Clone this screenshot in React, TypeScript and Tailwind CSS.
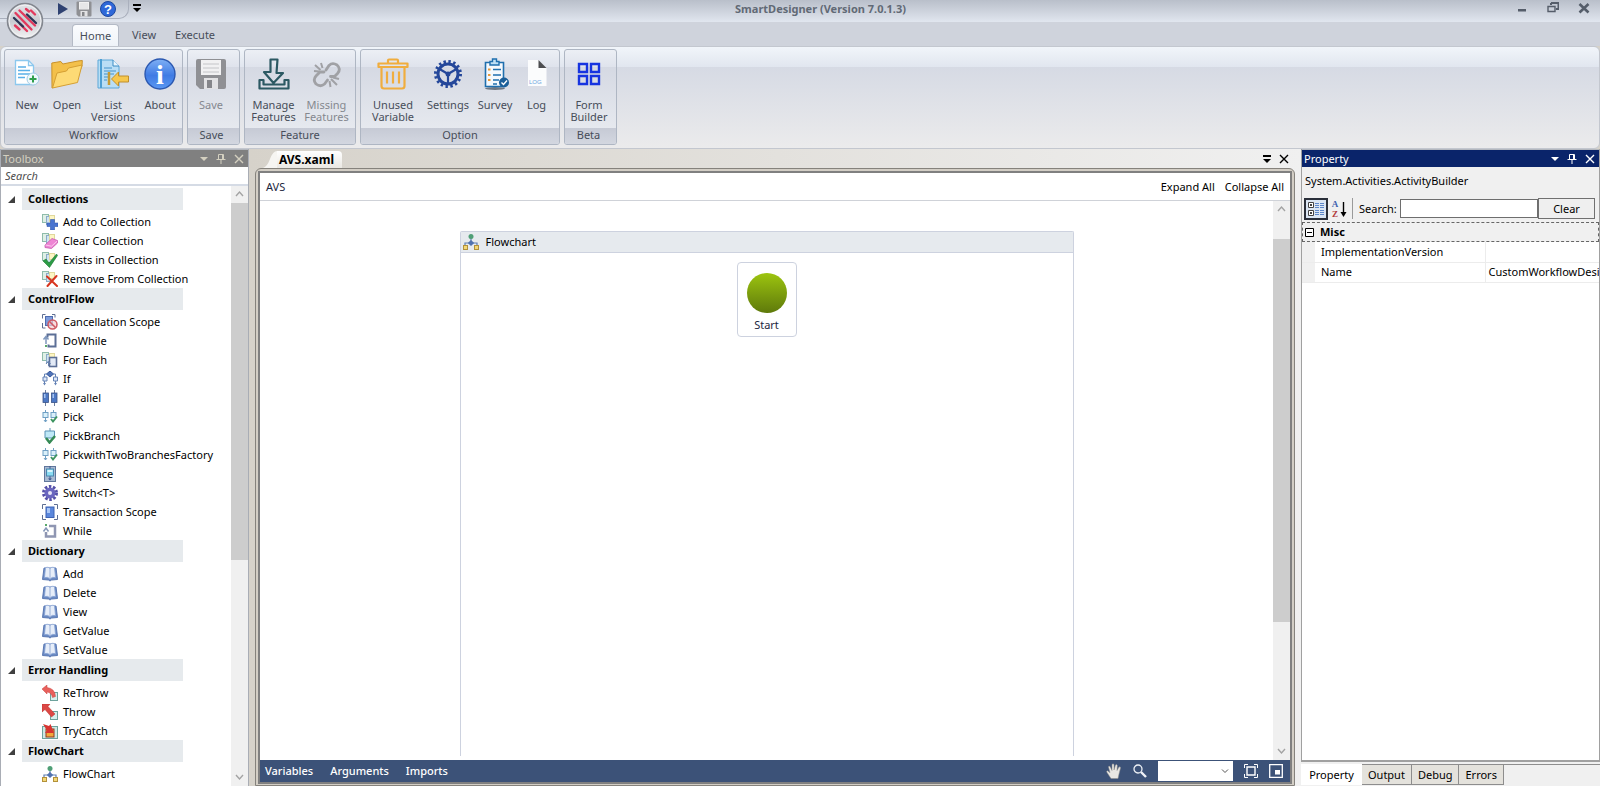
import type { ReactNode } from "react"
import clsx from "clsx"

type IconName =
  | "add"
  | "clear"
  | "exists"
  | "remove"
  | "cancel"
  | "doWhile"
  | "forEach"
  | "if"
  | "parallel"
  | "pick"
  | "pickBranch"
  | "sequence"
  | "switch"
  | "transaction"
  | "while"
  | "book"
  | "rethrow"
  | "throw"
  | "tryCatch"
  | "flowchart"

interface ToolGroup {
  title: string
  items: { label: string; icon: IconName }[]
}

const toolGroups: ToolGroup[] = [
  {
    title: "Collections",
    items: [
      { label: "Add to Collection", icon: "add" },
      { label: "Clear Collection", icon: "clear" },
      { label: "Exists in Collection", icon: "exists" },
      { label: "Remove From Collection", icon: "remove" },
    ],
  },
  {
    title: "ControlFlow",
    items: [
      { label: "Cancellation Scope", icon: "cancel" },
      { label: "DoWhile", icon: "doWhile" },
      { label: "For Each", icon: "forEach" },
      { label: "If", icon: "if" },
      { label: "Parallel", icon: "parallel" },
      { label: "Pick", icon: "pick" },
      { label: "PickBranch", icon: "pickBranch" },
      { label: "PickwithTwoBranchesFactory", icon: "pick" },
      { label: "Sequence", icon: "sequence" },
      { label: "Switch<T>", icon: "switch" },
      { label: "Transaction Scope", icon: "transaction" },
      { label: "While", icon: "while" },
    ],
  },
  {
    title: "Dictionary",
    items: [
      { label: "Add", icon: "book" },
      { label: "Delete", icon: "book" },
      { label: "View", icon: "book" },
      { label: "GetValue", icon: "book" },
      { label: "SetValue", icon: "book" },
    ],
  },
  {
    title: "Error Handling",
    items: [
      { label: "ReThrow", icon: "rethrow" },
      { label: "Throw", icon: "throw" },
      { label: "TryCatch", icon: "tryCatch" },
    ],
  },
  { title: "FlowChart", items: [{ label: "FlowChart", icon: "flowchart" }] },
]

// stacked sheets shared by the collection activities
const sheets = (
  <>
    <rect x="0.5" y="0.5" width="6" height="8" fill="#dff0e6" stroke="#8fbcab" />
    <rect x="4.5" y="2.5" width="6" height="8" fill="#cfe3f2" stroke="#8cabc8" />
    <rect x="7.5" y="1.5" width="5" height="6" fill="#fdf6c4" stroke="#e0d89c" />
  </>
)

const pickShape = (
  <g fill="#d9f0fa" stroke="#6f9fc4">
    <path d="M3.5 1v12M11.5 1v8" />
    <rect x="1" y="3.5" width="5" height="5" />
    <rect x="9" y="3.5" width="5" height="5" />
    <path d="M2 11l1.500 2 1.500-2" fill="none" />
    <path d="M9 10l2 2.500 4-5" fill="none" stroke="#3d9460" strokeWidth="2" />
  </g>
)

const toolIcons: Record<IconName, ReactNode> = {
  add: (
    <>
      {sheets}
      <path d="M8.500 5.500h4v3.500H16v3.500h-3.500V16h-4v-3.500H5V9h3.500z" fill="#4a74d0" stroke="#3157ad" strokeWidth="0.6" />
    </>
  ),
  clear: (
    <>
      {sheets}
      <path d="M3 12l7-6.500 5.500 2v2.500l-6 5.500-6.500-1z" fill="#ee86d4" stroke="#c75bae" strokeWidth="0.8" />
      <path d="M3.500 12l6 1.200 5.500-5" fill="none" stroke="#fbc8ee" />
    </>
  ),
  exists: (
    <>
      {sheets}
      <path d="M1 9l3-2 3 4 7.500-9 1 1.500L7.500 15.500z" fill="#2c9c45" stroke="#1d7a32" strokeWidth="0.6" />
    </>
  ),
  remove: (
    <>
      {sheets}
      <path d="M5 5.500l10 9.500M14.500 5L5.500 15" stroke="#d8351f" strokeWidth="2" strokeLinecap="round" />
    </>
  ),
  cancel: (
    <>
      <path d="M3.500 0.500h-3v4M0.500 9v5h3M10 0.500h3v3" fill="none" stroke="#5f6f92" />
      <rect x="3.500" y="2.500" width="7" height="9" fill="#7d9cdc" stroke="#4f6cae" />
      <circle cx="10.500" cy="10.500" r="4.500" fill="#f3cfd2" fillOpacity="0.7" stroke="#cf5962" strokeWidth="1.500" />
      <path d="M7.500 7.500l6 6" stroke="#cf5962" strokeWidth="1.500" />
    </>
  ),
  doWhile: (
    <>
      <path d="M6.500 3.500h-1v-2h8v12h-7v-2" fill="none" stroke="#5c6f96" strokeWidth="2" />
      <path d="M1.500 6.500l2.500-3 2.500 3M4 4v7" fill="none" stroke="#7f97bd" strokeWidth="1.500" />
      <rect x="3" y="12" width="2" height="2" fill="#58a86a" />
    </>
  ),
  while: (
    <>
      <path d="M7 3h6v10.500H4V9" fill="none" stroke="#8f96b2" strokeWidth="2.500" />
      <path d="M1.500 8.500L4 5l2.500 3.500" fill="none" stroke="#8596b8" strokeWidth="1.500" />
      <rect x="3" y="1" width="2" height="2" fill="#58a86a" />
    </>
  ),
  forEach: (
    <>
      {sheets}
      <rect x="7.500" y="5.500" width="7" height="9" fill="#e3eaf6" stroke="#5c6f96" strokeWidth="1.600" />
      <path d="M4 12l2.500-3 2 3M6.500 10v4" fill="none" stroke="#6680ad" />
    </>
  ),
  if: (
    <>
      <path d="M8 0l3.500 3L8 6 4.500 3z" fill="#4f73b8" stroke="#385a9d" />
      <path d="M5 3H2.500v9M11 3h2.500v9" fill="none" stroke="#6482b5" />
      <path d="M1 6h4v4H1zM11.500 6h4v4h-4z" fill="#dce7f8" stroke="#6482b5" />
      <path d="M1 12l1.500 2.500L4 12zM12 12l1.500 2.500L15 12z" fill="#6482b5" />
    </>
  ),
  parallel: (
    <>
      <path d="M3.500 0v16M12.500 0v16" stroke="#6e7f9f" />
      <rect x="1" y="3" width="5.500" height="9.500" fill="#4d78c4" stroke="#3b5388" strokeWidth="0.8" />
      <rect x="9.500" y="3" width="5.500" height="9.500" fill="#4d78c4" stroke="#3b5388" strokeWidth="0.8" />
      <path d="M2 4h1.500v4H2zM10.500 4H12v4h-1.500z" fill="#a6c3f0" />
    </>
  ),
  pick: pickShape,
  pickBranch: (
    <>
      <path d="M8 0v3M3 3h9.500v7H3z" fill="#bfe8f7" stroke="#5b92b5" />
      <path d="M4 10l3.500 4.500L13 8" fill="none" stroke="#358a55" strokeWidth="2.500" />
    </>
  ),
  sequence: (
    <>
      <rect x="2.500" y="0.500" width="11" height="15" fill="#a9bad2" stroke="#60769c" />
      <path d="M8 0v3M8 10v3" stroke="#38538c" />
      <rect x="4.500" y="3" width="7" height="7" fill="#8adcf3" stroke="#4b86ad" />
      <path d="M5.500 4h5v2h-5z" fill="#dcf6fd" />
      <path d="M6 12.500l2 2 2-2z" fill="#38538c" />
    </>
  ),
  switch: (
    <>
      <circle cx="8" cy="8" r="6.500" fill="none" stroke="#5550a8" strokeWidth="3" strokeDasharray="2.500 1.600" />
      <circle cx="8" cy="8" r="5.500" fill="#6a66bf" />
      <circle cx="8" cy="8" r="2" fill="#e8e7fa" />
    </>
  ),
  transaction: (
    <>
      <path d="M4 0.500H0.500V5M12 0.500h3.500V5M4 15.500H0.500V11M12 15.500h3.500V11" fill="none" stroke="#5f6f92" />
      <rect x="4" y="3" width="8" height="10.500" fill="#5b87dc" stroke="#3d62b3" />
      <rect x="5" y="4" width="3" height="5" fill="#a9c6f6" />
    </>
  ),
  book: (
    <>
      <path d="M0.500 13.500L2 2h12l1.500 11.500-6 0.500-1.500 1-1.500-1z" fill="#6a8ac4" stroke="#5a78b2" />
      <path d="M2.500 11.500L3.500 1.500q3-1 4.500 1 1.500-2 4.500-1l1 10q-3.500-1-5.500 1.500-2-2.500-5.500-1.500z" fill="#e7eef9" stroke="#8aa5d4" strokeWidth="0.8" />
      <path d="M8 2.500V13" stroke="#9ab0d8" />
    </>
  ),
  rethrow: (
    <>
      <rect x="8.500" y="7.500" width="7" height="8" fill="#d6f0ee" stroke="#6da29c" />
      <path d="M0 4l5-4v2.500q8 1 8.500 9l-3 1q-1-5-5.500-5.500V9z" fill="#e8605c" stroke="#c8423f" strokeWidth="0.5" />
    </>
  ),
  throw: (
    <>
      <rect x="8.500" y="7.500" width="7" height="8" fill="#d6f0ee" stroke="#6da29c" />
      <path d="M0 0h8L6 2.500l7 7.500-3.500 3-6.500-7.500L0 8z" fill="#dc4845" stroke="#b8302d" strokeWidth="0.5" />
    </>
  ),
  tryCatch: (
    <>
      <rect x="0.500" y="3.500" width="15" height="12" fill="#cde8e4" stroke="#6da29c" />
      <rect x="4" y="6" width="8" height="8" fill="#f2a93b" stroke="#8f3a22" />
      <path d="M1 1l6 2 1.500-2 3.500 9H3l2-2.500z" fill="#d83431" />
    </>
  ),
  flowchart: (
    <>
      <path d="M8 3v5M2 12V9h12v3" fill="none" stroke="#5f7fb2" strokeWidth="1.200" />
      <circle cx="8" cy="2.500" r="2.500" fill="#4f9f76" />
      <path d="M8 6l3.200 3L8 12 4.800 9z" fill="#5273b0" />
      <rect x="0.500" y="11.500" width="4" height="4" fill="#f3d877" stroke="#b3913a" />
      <rect x="11.500" y="11.500" width="4" height="4" fill="#f3d877" stroke="#b3913a" />
    </>
  ),
}

function ToolIcon({ name }: { name: IconName }) {
  return (
    <svg viewBox="0 0 16 16" className="size-4 shrink-0" aria-hidden="true">
      {toolIcons[name]}
    </svg>
  )
}

function Big({ children }: { children: ReactNode }) {
  return (
    <svg viewBox="0 0 32 32" className="size-8" fill="none" aria-hidden="true">
      {children}
    </svg>
  )
}

const newIcon = (
  <Big>
    <path d="M4.500 2.500h13l5 5v19h-18z" fill="#fff" stroke="#8cc8ee" strokeWidth="1.300" />
    <path d="M17.500 2.500v5h5" stroke="#8cc8ee" strokeWidth="1.300" />
    <path d="M7 9h8M7 12.500h12M7 16h12M7 19.500h7" stroke="#5ab0e8" strokeWidth="1.400" />
    <circle cx="22" cy="21" r="6" fill="#eef8fd" stroke="#a4cde6" />
    <path d="M22 17.500v7M18.500 21h7" stroke="#2f9f4c" strokeWidth="2" />
  </Big>
)

const openIcon = (
  <Big>
    <path d="M1 30L0.800 5l9-1.500 2 2.500 15-3 4.500-0.500L31 8 26 20z" fill="#f3c04a" stroke="#c9912a" />
    <path d="M1.500 30l4.500-15 9.500-2 2-3 13.500-3-4.500 17.500z" fill="#fdda75" stroke="#d59f33" />
  </Big>
)

const listIcon = (
  <Big>
    <path d="M1 2h15l6 6v22H1z" fill="#b9def5" stroke="#5aa7d8" />
    <path d="M16 2v6h6" fill="#eaf6fd" stroke="#3b8cc4" />
    <path d="M4 1v29" stroke="#4d9fd3" strokeWidth="2" />
    <path d="M7 10h8M7 13h12M7 16h10M7 19h4M7 22h3" stroke="#4592c9" strokeWidth="1.200" />
    <path d="M12 14v13" stroke="#c69b34" strokeWidth="2.500" />
    <path d="M14.500 21l7-7v4h10v6h-10v4z" fill="#f6c74d" stroke="#c08f2c" />
  </Big>
)

const aboutIcon = (
  <Big>
    <defs>
      <linearGradient id="aboutFill" x1="0" y1="0" x2="0" y2="1">
        <stop offset="0" stopColor="#7fb0f5" />
        <stop offset="0.550" stopColor="#3f7be4" />
        <stop offset="1" stopColor="#5a98f2" />
      </linearGradient>
    </defs>
    <circle cx="16" cy="16" r="15" fill="url(#aboutFill)" stroke="#2b58b0" strokeWidth="1.400" />
    <text x="16" y="26" textAnchor="middle" fontSize="28" fontWeight="700" fill="#fff" fontFamily="Liberation Serif, serif">
      i
    </text>
  </Big>
)

function Floppy({ className }: { className?: string }) {
  return (
    <svg viewBox="0 0 32 32" className={className} aria-hidden="true">
      <path d="M1 3q0-2 2-2h26q2 0 2 2v26q0 2-2 2H5l-4-4z" fill="#8f9094" />
      <path d="M6 2h20v15H6z" fill="#f1f1f2" />
      <path d="M8 6h16M8 10h16M8 14h16" stroke="#c4c5c8" />
      <path d="M9 20h14v11H9z" fill="#e2e2e4" />
      <path d="M12 22h5v8h-5z" fill="#85868a" />
    </svg>
  )
}

const manageIcon = (
  <Big>
    <path d="M12.500 1.500h7L18.500 15h6.500l-9.500 10L6 14h6.500zM1.500 22v8.500h29V22h-4v4.500h-21V22z" stroke="#2c5963" strokeWidth="2.200" strokeLinejoin="round" />
  </Big>
)

const missingIcon = (
  <Big>
    <g stroke="#a0a1a5" strokeWidth="2.800" strokeLinecap="round">
      <path d="M15 12l3-4.500q3.500-3.500 8-0.500 4.500 4 0.500 8.500l-3 3h-4" />
      <path d="M13 14h-4l-4 4q-3.500 4 0 8 4.500 3.500 8.500 0l3-4" />
    </g>
    <path d="M10 5l1.500 5M4 7l5.500 5M3 13l5 0.500M20 21l6 6M18.500 23l1 6M22 19.500l6 1.500" stroke="#a0a1a5" strokeWidth="2" />
  </Big>
)

const trashIcon = (
  <Big>
    <g stroke="#f0ad3e" strokeWidth="2.200" strokeLinejoin="round">
      <path d="M1.500 5.500h29v3.500h-29zM11 5.500v-3q0-1 1-1h8q1 0 1 1v3" />
      <path d="M4.500 9v19q0 2.500 2.500 2.500h18q2.500 0 2.500-2.500V9" />
      <path d="M10 13.500v12M16 13.500v12M22 13.500v12" />
    </g>
  </Big>
)

const settingsIcon = (
  <Big>
    <circle cx="16" cy="16" r="12.500" stroke="#24479a" strokeWidth="3" strokeDasharray="2.400 2.510" />
    <circle cx="16" cy="16" r="10" stroke="#24479a" strokeWidth="3" />
    <path d="M16 16L7.500 11M16 16v10M16 16l8.500-5" stroke="#24479a" strokeWidth="2.200" />
    <circle cx="16" cy="16" r="2.500" fill="#24479a" />
  </Big>
)

const surveyIcon = (
  <Big>
    <ellipse cx="16" cy="30.500" rx="10" ry="1.500" fill="#6f7782" />
    <path d="M6.500 4.500h18v24h-18z" fill="#f5f9fd" stroke="#1f6fae" strokeWidth="1.600" />
    <path d="M11 7V3.500h2.500V1h4v2.500H20V7z" fill="#bfe0f5" stroke="#1f6fae" strokeWidth="1.400" />
    <path d="M14 11.500h8M14 17h8M14 22h6M14 26h4" stroke="#1f6fae" strokeWidth="1.500" />
    <path d="M9 11.500h2.500M9 17h2.500M9 22h2.500" stroke="#e99a3d" strokeWidth="2" />
    <circle cx="25" cy="24.500" r="5" fill="#1b5f99" />
    <path d="M22.500 24.500l2 2 3.500-4" stroke="#fff" strokeWidth="1.400" />
  </Big>
)

const logIcon = (
  <Big>
    <path d="M7 2h10.500l8 8v18H7z" fill="#fbfcfd" />
    <path d="M17.500 2l8 8h-8z" fill="#4c4d50" />
    <text x="8" y="26" fontSize="6" fill="#6aa5e0" fontFamily="Liberation Sans, sans-serif">
      LOG
    </text>
  </Big>
)

const formIcon = (
  <Big>
    <path d="M6 6h8v8H6zM18 6h8v8h-8zM6 18h8v8H6zM18 18h8v8h-8z" stroke="#1734e0" strokeWidth="2.400" />
  </Big>
)

interface RibbonItem {
  label: string[]
  icon: ReactNode
  width: string
  disabled?: boolean
}

const ribbonGroups: { title: string; className: string; items: RibbonItem[] }[] = [
  {
    title: "Workflow",
    className: "w-[179px] pl-[3px]",
    items: [
      { label: ["New"], icon: newIcon, width: "w-10" },
      { label: ["Open"], icon: openIcon, width: "w-10" },
      { label: ["List", "Versions"], icon: listIcon, width: "w-[52px]" },
      { label: ["About"], icon: aboutIcon, width: "w-[42px]" },
    ],
  },
  {
    title: "Save",
    className: "w-[53px]",
    items: [{ label: ["Save"], icon: <Floppy className="size-8" />, width: "w-12", disabled: true }],
  },
  {
    title: "Feature",
    className: "w-[112px] pl-[3px]",
    items: [
      { label: ["Manage", "Features"], icon: manageIcon, width: "w-[53px]" },
      { label: ["Missing", "Features"], icon: missingIcon, width: "w-[53px]", disabled: true },
    ],
  },
  {
    title: "Option",
    className: "w-[200px] pl-1.5",
    items: [
      { label: ["Unused", "Variable"], icon: trashIcon, width: "w-[54px]" },
      { label: ["Settings"], icon: settingsIcon, width: "w-[56px]" },
      { label: ["Survey"], icon: surveyIcon, width: "w-[38px]" },
      { label: ["Log"], icon: logIcon, width: "w-[45px]" },
    ],
  },
  {
    title: "Beta",
    className: "w-[53px]",
    items: [{ label: ["Form", "Builder"], icon: formIcon, width: "w-[50px]" }],
  },
]

function PinIcon() {
  return (
    <svg viewBox="0 0 10 12" className="h-3 w-2.5" fill="none" stroke="currentColor" aria-hidden="true">
      <path d="M2.500 6.500v-5h5v5M6.500 1.500v5M0.500 6.500h9M5 7v4" />
    </svg>
  )
}

function CloseIcon() {
  return (
    <svg viewBox="0 0 10 10" className="size-2.5" fill="none" stroke="currentColor" strokeWidth="1.400" aria-hidden="true">
      <path d="M1 1l8 8M9 1L1 9" />
    </svg>
  )
}

function CaretIcon() {
  return (
    <svg viewBox="0 0 8 4" className="h-1 w-2" fill="currentColor" aria-hidden="true">
      <path d="M0 0h8L4 4z" />
    </svg>
  )
}

function OverflowIcon() {
  return (
    <svg viewBox="0 0 8 8" className="size-2" fill="currentColor" aria-hidden="true">
      <path d="M0 0h8v2H0zM0 4h8L4 8z" />
    </svg>
  )
}

function PanelTitle({ title, active = false }: { title: string; active?: boolean }) {
  return (
    <header
      className={clsx(
        "flex h-[18px] shrink-0 items-center border-t border-[#b4b8bf] pr-1 pl-0.5",
        active ? "bg-[#0a246a] text-white" : "bg-[#808080] text-[#d4d0c0]",
      )}
    >
      <h2 className="flex-1">{title}</h2>
      <div className="flex items-center gap-2">
        <button type="button" aria-label={`${title} menu`}><CaretIcon /></button>
        <button type="button" aria-label={`Pin ${title}`}><PinIcon /></button>
        <button type="button" aria-label={`Close ${title}`}><CloseIcon /></button>
      </div>
    </header>
  )
}

function ScrollBar({ thumb }: { thumb: string }) {
  return (
    <div className="flex w-[17px] shrink-0 flex-col bg-[#f0f0f0]" aria-hidden="true">
      <svg viewBox="0 0 17 17" className="size-[17px]" fill="none" stroke="#a3a3a3" strokeWidth="1.400">
        <path d="M5 10l3.500-4 3.500 4" />
      </svg>
      <div className="flex min-h-0 flex-1 flex-col">
        <div className={clsx("bg-[#cdcdcd]", thumb)} />
      </div>
      <svg viewBox="0 0 17 17" className="size-[17px]" fill="none" stroke="#a3a3a3" strokeWidth="1.400">
        <path d="M5 6l3.500 4L12 6" />
      </svg>
    </div>
  )
}

function TitleBar() {
  return (
    <header className="relative flex h-[22px] shrink-0 items-start bg-linear-to-b from-[#b9bfca] to-[#e1e6ef] text-[#596270]">
      <div className="flex h-[19px] w-[129px] items-center gap-2 rounded-br-[10px] border-r border-b border-[#aab0bd] pl-[58px]">
        <button type="button" aria-label="Run">
          <svg viewBox="0 0 10 12" className="h-3 w-2.5" fill="#2f4272" aria-hidden="true">
            <path d="M0 0l10 6-10 6z" />
          </svg>
        </button>
        <button type="button" aria-label="Save">
          <Floppy className="size-4" />
        </button>
        <button type="button" aria-label="Help">
          <svg viewBox="0 0 16 16" className="size-4" aria-hidden="true">
            <circle cx="8" cy="8" r="7.500" fill="#2f68d8" stroke="#1c479f" />
            <text x="8" y="12.500" textAnchor="middle" fontSize="13" fontWeight="700" fill="#fff" fontFamily="Liberation Sans, sans-serif">
              ?
            </text>
          </svg>
        </button>
      </div>
      <button type="button" aria-label="Customize quick access" className="mt-1 ml-1 text-black">
        <OverflowIcon />
      </button>
      <h1 className="flex-1 pr-4 text-center leading-[17px] font-bold text-[#616975]">
        SmartDesigner (Version 7.0.1.3)
      </h1>
      <div className="flex gap-[19px] pt-0.5 pr-2.5 text-[#555d6a]">
        <button type="button" aria-label="Minimize">
          <svg viewBox="0 0 12 12" className="size-3" aria-hidden="true">
            <path d="M2 7h8v2.500H2z" fill="currentColor" />
          </svg>
        </button>
        <button type="button" aria-label="Restore">
          <svg viewBox="0 0 12 12" className="size-3" fill="none" stroke="currentColor" aria-hidden="true">
            <path d="M4 1h7.500v6H9M4 1v2" strokeWidth="2" />
            <path d="M1 4.500h7v5H1z" strokeWidth="1.400" />
          </svg>
        </button>
        <button type="button" aria-label="Close">
          <svg viewBox="0 0 12 12" className="size-3" fill="none" stroke="currentColor" strokeWidth="2.600" aria-hidden="true">
            <path d="M1.500 2l9 8.500M10.500 2l-9 8.500" />
          </svg>
        </button>
      </div>
      <button type="button" aria-label="Application menu" className="absolute top-0.5 left-1.5 z-10">
        <svg viewBox="0 0 38 38" className="size-[38px]" aria-hidden="true">
          <defs>
            <linearGradient id="orb" x1="0" y1="0" x2="0" y2="1">
              <stop offset="0" stopColor="#e3e4e8" />
              <stop offset="0.500" stopColor="#c9cbd1" />
              <stop offset="1" stopColor="#f3f3f4" />
            </linearGradient>
          </defs>
          <circle cx="19" cy="19" r="17.500" fill="url(#orb)" stroke="#83878f" strokeWidth="1.600" />
          <circle cx="19" cy="19" r="16" fill="none" stroke="#f2f3f5" />
          <g strokeWidth="2.400" strokeLinecap="round">
            <path d="M20 7l3 2.500M13.500 8.500l15.500 15M9.500 11l16 16.500M9 23.500l4.500 4M25 8.500l4 4M14 22l7 7" stroke="#e2385c" />
            <path d="M21 12.500l9 8.500M8 16l9 8.500" stroke="#2c3555" />
          </g>
        </svg>
      </button>
    </header>
  )
}

function Ribbon() {
  return (
    <section className="flex shrink-0 flex-col text-[#474d59]" aria-label="Ribbon">
      <nav className="flex h-6 items-end bg-[#cfd3dc] pl-[72px] leading-[18px]" role="tablist">
        <button
          type="button"
          role="tab"
          aria-selected="true"
          className="h-[22px] w-[47px] rounded-t-sm border border-b-0 border-[#b4bac6] bg-linear-to-b from-[#fbfcfe] to-[#eff3f8]"
        >
          Home
        </button>
        <button type="button" role="tab" aria-selected="false" className="h-[22px] w-[50px]">View</button>
        <button type="button" role="tab" aria-selected="false" className="h-[22px] w-[52px]">Execute</button>
      </nav>
      <div className="flex h-[103px] gap-1 rounded-md border border-[#c3c7cf] bg-[linear-gradient(#f1f5fa_0,#e1e6ef_20px,#d6dae4_20px,#ebebec_100%)] px-[3px] pt-0.5">
        {ribbonGroups.map((group) => (
          <div
            key={group.title}
            className="flex h-24 flex-col overflow-hidden rounded-[3px] border border-[#aeb6c3] bg-[linear-gradient(#eceff5_0,#dfe3ec_17px,#d5d9e3_17px,#e6e9ef_79px)]"
          >
            <div className={clsx("-mx-px flex flex-1", group.className)}>
              {group.items.map((item) => (
                <button
                  key={item.label.join(" ")}
                  type="button"
                  disabled={item.disabled}
                  className={clsx(
                    "flex flex-col items-center pt-2 leading-3",
                    item.width,
                    item.disabled && "text-[#85888f]",
                  )}
                >
                  {item.icon}
                  <span className="mt-[9px] flex flex-col">
                    {item.label.map((line) => (
                      <span key={line}>{line}</span>
                    ))}
                  </span>
                </button>
              ))}
            </div>
            <p
              className={clsx(
                "h-4 bg-linear-to-b from-[#c6cad5] to-[#d3d7e0] text-center leading-[14px]",
                group.items.length === 1 && "pr-1",
              )}
            >
              {group.title}
            </p>
          </div>
        ))}
      </div>
    </section>
  )
}

function Toolbox() {
  return (
    <aside className="flex w-[249px] shrink-0 flex-col border-x border-[#a9adb5] bg-white">
      <PanelTitle title="Toolbox" />
      <input
        type="text"
        aria-label="Search toolbox"
        placeholder="Search"
        className="h-[19px] shrink-0 border-b-2 border-[#d5dbe5] px-1 italic outline-none placeholder:text-[#4d4d4d]"
      />
      <div className="flex min-h-0 flex-1">
        <div className="min-w-0 flex-1 overflow-hidden pt-0.5">
          {toolGroups.map((group) => (
            <section key={group.title}>
              <h3 className="mb-0.5 flex h-[22px] items-center">
                <svg viewBox="0 0 7 7" className="mr-[7px] ml-[7px] size-[7px]" aria-hidden="true">
                  <path d="M7 0v7H0z" fill="#404040" />
                </svg>
                <span className="w-[161px] bg-[#e6eaed] pl-1.5 leading-[22px] font-bold">{group.title}</span>
              </h3>
              <ul>
                {group.items.map((item) => (
                  <li key={item.label} className="flex h-[19px] items-center gap-[5px] pl-[41px] leading-[18px]">
                    <ToolIcon name={item.icon} />
                    {item.label}
                  </li>
                ))}
              </ul>
            </section>
          ))}
        </div>
        <ScrollBar thumb="h-[63%]" />
      </div>
    </aside>
  )
}

function Designer() {
  return (
    <main className="flex min-w-0 flex-1 flex-col bg-linear-to-r from-[#d6d2ca] to-[#f0f0f0] px-1.5">
      <div className="flex h-[19px] shrink-0 items-end pr-1.5 pl-2">
        <svg viewBox="0 0 14 17" className="h-[17px] w-3.5" aria-hidden="true">
          <path d="M0 17Q4 16 7 8T14 0v17z" fill="#f6f5f2" />
        </svg>
        <button
          type="button"
          className="h-[17px] rounded-tr-sm bg-linear-to-b from-white to-[#eae8e3] pr-2 pl-0.5 text-[12px] leading-[17px] font-bold"
        >
          AVS.xaml
        </button>
        <div className="flex flex-1 items-center justify-end gap-2 pb-1">
          <button type="button" aria-label="Open documents"><OverflowIcon /></button>
          <button type="button" aria-label="Close document"><CloseIcon /></button>
        </div>
      </div>
      <div className="flex min-h-0 flex-1 rounded-t-md border border-[#85827c] bg-[#d3cec5] p-0.5 pb-px">
        <div className="flex min-w-0 flex-1 flex-col border-2 border-[#808080] bg-white">
          <div className="flex h-7 shrink-0 items-center gap-2.5 border-b border-[#cfd2d8] px-1.5">
            <span className="flex-1 text-[#1c2740]">AVS</span>
            <button type="button">Expand All</button>
            <button type="button">Collapse All</button>
          </div>
          <div className="flex min-h-0 flex-1">
            <div className="flex min-w-0 flex-1 justify-center pt-[30px] pb-1">
              <div className="flex w-[614px] flex-col rounded-t-xs border border-b-0 border-[#cdd2df]">
                <div className="flex h-[21px] items-center gap-[7px] border-b border-[#cdd2df] bg-[#e6eaee] pl-0.5 leading-[18px]">
                  <ToolIcon name="flowchart" />
                  Flowchart
                </div>
                <div className="flex justify-center pt-[9px]">
                  <div className="flex h-[75px] w-[60px] flex-col items-center rounded-sm border border-[#cdd2df] pt-2.5 text-[#1c2740]">
                    <div className="size-10 rounded-full bg-linear-to-b from-[#9dc50f] to-[#5f7a0b]" />
                    <span className="mt-1">Start</span>
                  </div>
                </div>
              </div>
            </div>
            <ScrollBar thumb="mt-[21px] h-[73%]" />
          </div>
          <footer className="flex h-[22px] shrink-0 items-center bg-[#3c5278] text-white">
            <div className="flex flex-1 gap-[17px] pl-[5px] font-medium">
              <button type="button">Variables</button>
              <button type="button">Arguments</button>
              <button type="button">Imports</button>
            </div>
            <div className="flex items-center gap-[11px] pr-[7px]">
              <button type="button" aria-label="Pan">
                <svg viewBox="0 0 16 16" className="size-4" aria-hidden="true">
                  <path d="M5 15.500l-4-6q-1-1.500 0.500-1.800l2.500 2L2.500 4Q2.800 2.500 4 3.500l2 4V1.500q1-1.300 2 0V7l1.500-5q1.300-1 1.800 0.500L11 7.500 13 4q1.500-0.700 1.500 1L13 11l-1 4.500z" fill="#e9e7e3" stroke="#8f8d88" strokeWidth="0.500" />
                </svg>
              </button>
              <button type="button" aria-label="Reset zoom">
                <svg viewBox="0 0 14 14" className="size-3.5" fill="none" stroke="#eef1f6" aria-hidden="true">
                  <circle cx="5" cy="5" r="4" strokeWidth="1.300" />
                  <path d="M8 8l5 5" strokeWidth="2.400" />
                </svg>
              </button>
              <div className="relative flex">
                <select aria-label="Zoom" className="h-5 w-[75px] appearance-none bg-white text-black" />
                <svg viewBox="0 0 8 5" className="pointer-events-none absolute top-2 right-1 h-[5px] w-2" fill="none" stroke="#555" aria-hidden="true">
                  <path d="M1 0.500l3 3 3-3" />
                </svg>
              </div>
              <button type="button" aria-label="Fit to screen">
                <svg viewBox="0 0 14 14" className="size-3.5" fill="none" stroke="#fff" aria-hidden="true">
                  <path d="M0.500 4V0.500H4M10 0.500h3.500V4M13.500 10v3.500H10M4 13.500H0.500V10" />
                  <path d="M3 3h8v8H3z" strokeWidth="1.400" />
                </svg>
              </button>
              <button type="button" aria-label="Overview">
                <svg viewBox="0 0 14 14" className="size-3.5" aria-hidden="true">
                  <path d="M0.700 0.700h12.600v12.600H0.700z" fill="none" stroke="#fff" strokeWidth="1.300" />
                  <path d="M6 6h5v4.500H6z" fill="#fff" />
                </svg>
              </button>
            </div>
          </footer>
        </div>
      </div>
    </main>
  )
}

function PropertyPanel() {
  return (
    <aside className="flex w-[299px] shrink-0 flex-col bg-[#f0f0f0]">
      <div className="flex min-h-0 flex-1 flex-col border-x border-b-2 border-[#a0a0a0]">
        <PanelTitle title="Property" active />
        <p className="px-[3px] pt-[5px] leading-[18px]">System.Activities.ActivityBuilder</p>
        <div className="mt-[7px] flex h-[23px] shrink-0 items-center pr-1 pl-0.5">
          <button type="button" aria-label="Categorized" className="border-2 border-[#2a2f3a] bg-[#dbe6f4] p-0.5">
            <svg viewBox="0 0 16 14" className="h-3.5 w-4" fill="none" aria-hidden="true">
              <path d="M0.500 0.500h5v5h-5zM0.500 8.500h5v5h-5z" fill="#fff" stroke="#444" />
              <path d="M2 3h2M3 2v2M2 11h2M3 10v2" stroke="#000" />
              <path d="M7 1.500h9M7 3.500h9M7 5.500h9M7 8.500h9M7 10.500h9M7 12.500h9" stroke="#5d87c9" strokeDasharray="4 1" />
            </svg>
          </button>
          <button type="button" aria-label="Sort alphabetically" className="ml-[3px] flex items-center">
            <span className="flex w-2 flex-col items-center font-['Liberation_Serif',serif] text-[9px] leading-[10px] font-bold">
              <span className="text-[#3f5fae]">A</span>
              <span className="text-[#b03a3a]">Z</span>
            </span>
            <svg viewBox="0 0 8 18" className="h-[18px] w-2" aria-hidden="true">
              <path d="M4.500 2v12" stroke="#000" strokeWidth="1.400" />
              <path d="M1.500 12h6l-3 5z" />
            </svg>
          </button>
          <div className="mx-[5px] h-[21px] w-px bg-[#9a9a9a]" />
          <label htmlFor="property-search" className="mx-px">Search:</label>
          <input
            id="property-search"
            type="text"
            className="ml-0.5 h-[19px] min-w-0 flex-1 border border-[#6e6e6e] bg-white px-1 outline-none"
          />
          <button type="button" className="h-[21px] w-[57px] border border-[#707070] bg-[#efefef]">Clear</button>
        </div>
        <button
          type="button"
          className="mt-0.5 flex h-5 shrink-0 items-center gap-1.5 border border-dashed border-[#666] pl-0.5 font-bold"
        >
          <svg viewBox="0 0 9 9" className="size-[9px]" fill="#fff" stroke="#000" aria-hidden="true">
            <path d="M0.500 0.500h8v8h-8zM2 4.500h5" />
          </svg>
          Misc
        </button>
        <div className="flex-1 overflow-hidden bg-white">
          <table className="w-full table-fixed border-collapse">
            <tbody>
              {[
                ["ImplementationVersion", ""],
                ["Name", "CustomWorkflowDesigner"],
              ].map(([name, value]) => (
                <tr key={name} className="h-5 border-b border-[#ececec]">
                  <td className="w-[13px] bg-[#f0f0f0]" />
                  <th scope="row" className="w-[170px] border-r border-[#ececec] pl-1.5 text-left font-normal">{name}</th>
                  <td className="overflow-hidden pl-[3px] whitespace-nowrap">{value}</td>
                </tr>
              ))}
            </tbody>
          </table>
        </div>
      </div>
      <nav className="mt-0.5 flex h-[22px] shrink-0 pb-px" role="tablist">
        <button type="button" role="tab" aria-selected="true" className="w-[61px] bg-white">Property</button>
        {["Output", "Debug", "Errors"].map((tab) => (
          <button
            key={tab}
            type="button"
            role="tab"
            aria-selected="false"
            className="border-t border-r border-b border-[#8d8d8d] bg-[#e4e2dc] px-1.5"
          >
            {tab}
          </button>
        ))}
        <div className="flex-1 border-t border-[#8d8d8d]" />
      </nav>
    </aside>
  )
}

export default function App() {
  return (
    <div className="flex h-screen min-h-[480px] flex-col bg-[#d6d2ca] font-['Noto_Sans','Open_Sans',sans-serif] text-[11px] leading-4 text-black">
      <TitleBar />
      <Ribbon />
      <div className="flex min-h-0 flex-1">
        <Toolbox />
        <Designer />
        <PropertyPanel />
      </div>
    </div>
  )
}
